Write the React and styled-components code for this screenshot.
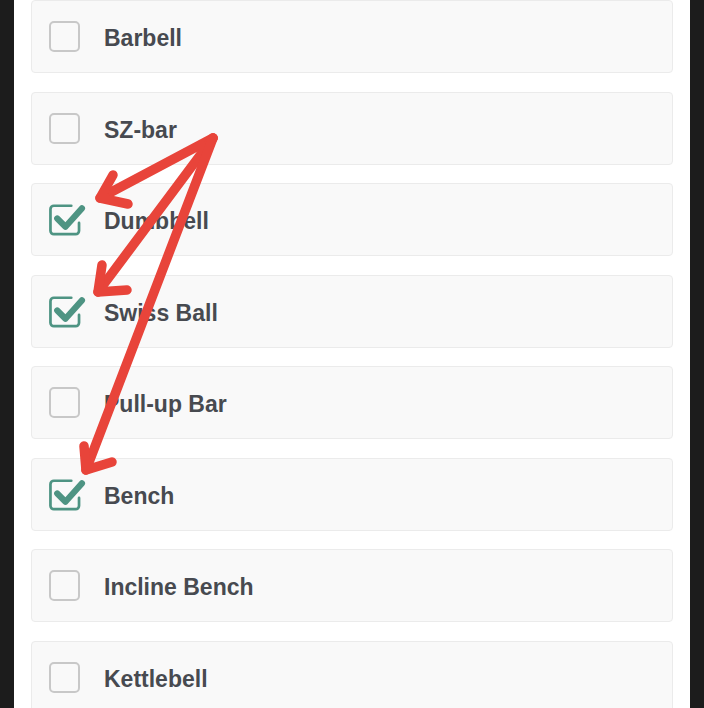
import React from "react";
import styled, { createGlobalStyle } from "styled-components";

const GlobalStyle = createGlobalStyle`
  html, body {
    margin: 0;
    padding: 0;
    background: #1c1c1c;
    overflow: hidden;
  }
  * {
    box-sizing: border-box;
  }
`;

const Page = styled.div`
  position: relative;
  width: 704px;
  height: 708px;
  overflow: hidden;
  background: #1c1c1c;
`;

const Panel = styled.div`
  margin: 0 14px;
  height: 100%;
  background: #ffffff;
  padding: 0 17px;
  display: flex;
  flex-direction: column;
  gap: 18.5px;
`;

const Row = styled.label`
  flex: 0 0 73px;
  display: flex;
  align-items: center;
  gap: 24px;
  padding-left: 17px;
  background: #f9f9f9;
  border: 1px solid #ebebeb;
  border-radius: 4px;
  cursor: pointer;
`;

const Label = styled.span`
  font-family: "Liberation Sans", Arial, sans-serif;
  font-weight: 700;
  font-size: 23px;
  color: #474a50;
  padding-top: 4px;
`;

const Box = styled.span`
  width: 31px;
  height: 31px;
  flex: 0 0 31px;
  display: flex;
  align-items: center;
  justify-content: center;
  border: ${(p) => (p.$checked ? "none" : "2.5px solid #c8c8c8")};
  border-radius: 5px;
  svg {
    overflow: visible;
  }
`;

const Overlay = styled.svg`
  position: absolute;
  left: 0;
  top: 0;
  pointer-events: none;
`;

const CheckIcon = () => (
  <svg width="31" height="31" viewBox="0 0 32 32">
    <path
      d="M23 1.8 H5 A3.5 3.5 0 0 0 1.5 5.3 V27.7 A3.5 3.5 0 0 0 5 31.2 H27.5 A3.5 3.5 0 0 0 31 27.7 V19.5"
      fill="none"
      stroke="#4e9483"
      strokeWidth="2.8"
      strokeLinecap="round"
    />
    <polyline
      points="8.5,15 17,23.5 34,4.5"
      fill="none"
      stroke="#4e9483"
      strokeWidth="6.4"
      strokeLinecap="round"
      strokeLinejoin="round"
    />
  </svg>
);

const items = [
  { name: "Barbell", checked: false },
  { name: "SZ-bar", checked: false },
  { name: "Dumbbell", checked: true },
  { name: "Swiss Ball", checked: true },
  { name: "Pull-up Bar", checked: false },
  { name: "Bench", checked: true },
  { name: "Incline Bench", checked: false },
  { name: "Kettlebell", checked: false },
];

// hand-drawn annotation arrows from SZ-bar to the checked rows
const arrows = [
  { tip: [100, 198], barbs: [[113, 175], [128, 204]] },
  { tip: [98, 292], barbs: [[102, 265], [127, 290]] },
  { tip: [86, 470], barbs: [[84, 446], [112, 462]] },
];

export default function App() {
  return (
    <>
      <GlobalStyle />
      <Page>
        <Panel>
          {items.map((item) => (
            <Row key={item.name}>
              <Box $checked={item.checked}>{item.checked && <CheckIcon />}</Box>
              <Label>{item.name}</Label>
            </Row>
          ))}
        </Panel>
        <Overlay width="704" height="708" viewBox="0 0 704 708">
          <g fill="none" stroke="#e8443a" strokeWidth="9.5" strokeLinecap="round" strokeLinejoin="round">
            {arrows.map((a, i) => (
              <g key={i}>
                <line x1="213" y1="138" x2={a.tip[0]} y2={a.tip[1]} />
                <polyline
                  points={`${a.barbs[0][0]},${a.barbs[0][1]} ${a.tip[0]},${a.tip[1]} ${a.barbs[1][0]},${a.barbs[1][1]}`}
                />
              </g>
            ))}
          </g>
        </Overlay>
      </Page>
    </>
  );
}
